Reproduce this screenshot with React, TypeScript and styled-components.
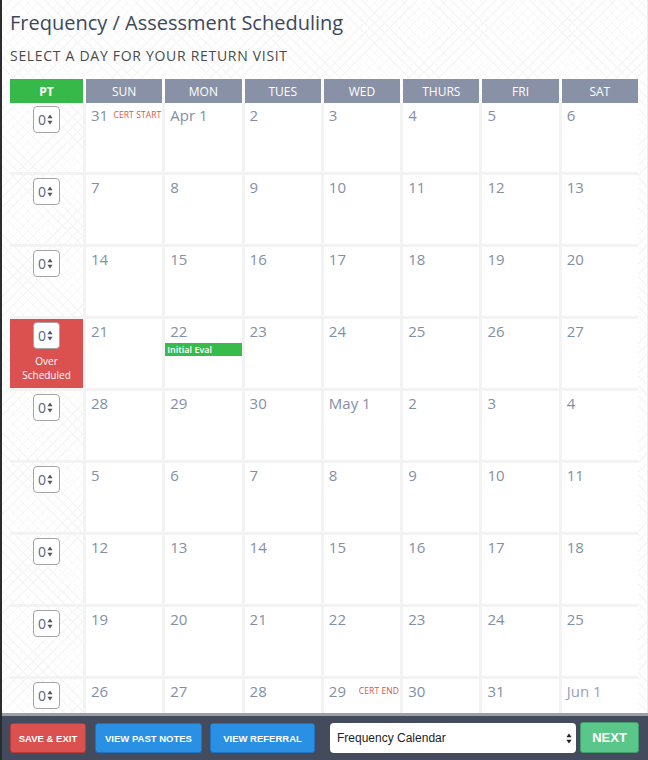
import React from "react";
import styled, { createGlobalStyle } from "styled-components";

const GlobalStyle = createGlobalStyle`
  html, body { margin: 0; padding: 0; background: #2a2a2a; }
  * { box-sizing: border-box; }
`;

const Frame = styled.div`
  width: 648px;
  height: 760px;
  display: flex;
  flex-direction: column;
  border-left: 2px solid #2c2c2c;
  background-color: #ffffff;
  background-image:
    repeating-linear-gradient(45deg, #f6f6f6 0 1px, transparent 1px 7px),
    repeating-linear-gradient(-45deg, #f6f6f6 0 1px, transparent 1px 7px);
  overflow: hidden;
  font-family: "Open Sans", "Liberation Sans", sans-serif;
`;

const Content = styled.div`
  flex: 1;
  min-height: 0;
  overflow: hidden;
  padding: 8px 8px 0 8px;
  border-right: 1px solid #ececec;
`;

const Title = styled.h1`
  margin: 0;
  font-size: 20px;
  line-height: 30px;
  font-weight: 400;
  color: #3d485c;
`;

const Subtitle = styled.h2`
  margin: 8px 0 0 0;
  font-size: 14px;
  line-height: 20px;
  font-weight: 400;
  letter-spacing: 0.7px;
  color: #4a4a4a;
`;

const Grid = styled.div`
  margin-top: 13px;
  display: grid;
  grid-template-columns: 73px repeat(7, 1fr);
  width: 628px;
`;

const HeaderCell = styled.div<{ $pt?: boolean }>`
  height: 24px;
  margin-left: ${(p) => (p.$pt ? "0" : "3px")};
  background: ${(p) => (p.$pt ? "#37b94a" : "#8991a6")};
  color: #ffffff;
  font-size: 12px;
  font-weight: ${(p) => (p.$pt ? 700 : 400)};
  display: flex;
  align-items: center;
  justify-content: center;
`;

const PtCell = styled.div<{ $over?: boolean }>`
  height: 72px;
  border-bottom: 3px solid #f3f3f3;
  background: ${(p) => (p.$over ? "#db5150" : "transparent")};
  display: flex;
  flex-direction: column;
  align-items: center;
  padding-top: 3px;
`;

const Spinner = styled.div`
  width: 27px;
  height: 27px;
  border: 1px solid #a5a5a5;
  border-radius: 4px;
  background: #ffffff;
  display: flex;
  align-items: center;
  padding-left: 4px;
  gap: 1px;
  font-size: 14px;
  color: #5a6378;
`;

const OverText = styled.div`
  margin-top: 5px;
  color: #ffffff;
  font-size: 10px;
  text-align: center;
`;

const OverLine = styled.div`
  height: 14px;
  line-height: 14px;
`;

const DayCell = styled.div`
  height: 72px;
  background: #ffffff;
  border-left: 3px solid #f3f3f3;
  border-bottom: 3px solid #f3f3f3;
  display: flex;
  flex-direction: column;
`;

const DayHead = styled.div`
  display: flex;
  justify-content: space-between;
  align-items: flex-start;
  padding: 3px 1px 0 5px;
`;

const DayNum = styled.span<{ $muted?: boolean }>`
  font-size: 15px;
  line-height: 18px;
  color: ${(p) => (p.$muted ? "#9a9dbc" : "#8290a5")};
`;

const CertLabel = styled.span`
  font-size: 8.5px;
  line-height: 12px;
  margin-top: 3px;
  color: #e0553f;
  letter-spacing: 0.1px;
`;

const EventBar = styled.div`
  margin-top: 3px;
  height: 13px;
  background: #37bb4a;
  color: #ffffff;
  font-size: 9px;
  font-weight: 600;
  line-height: 13px;
  padding-left: 2px;
`;

const Footer = styled.div`
  height: 47px;
  flex-shrink: 0;
  border-top: 3px solid #9b9fa9;
  background: #444b5c;
  display: flex;
  align-items: center;
  padding: 0 7px 0 8px;
`;

const Btn = styled.button<{ $tone: "red" | "blue"; $w: number; $gap: number }>`
  width: ${(p) => p.$w}px;
  height: 30px;
  padding: 0;
  margin-right: ${(p) => p.$gap}px;
  border-radius: 3px;
  border: 1px solid ${(p) => (p.$tone === "red" ? "#b53a39" : "#1f72c0")};
  background: ${(p) => (p.$tone === "red" ? "#da5150" : "#2a90e3")};
  color: #ffffff;
  font-family: "Liberation Sans", Arial, sans-serif;
  font-weight: 700;
  font-size: 9.5px;
  white-space: nowrap;
  display: flex;
  align-items: center;
  justify-content: center;
`;

const SelectBox = styled.div`
  width: 246px;
  height: 30px;
  background: #ffffff;
  border-radius: 4px;
  display: flex;
  align-items: center;
  justify-content: space-between;
  padding: 0 4px 0 7px;
  font-family: "Liberation Sans", Arial, sans-serif;
  font-size: 12px;
  color: #1e1e1e;
`;

const NextBtn = styled.button`
  margin-left: 4px;
  width: 59px;
  height: 31px;
  margin-top: -1px;
  border-radius: 3px;
  border: 1px solid #3f9e69;
  background: #5bc68a;
  color: #ffffff;
  font-family: "Liberation Sans", Arial, sans-serif;
  font-weight: 700;
  font-size: 13px;
`;

const Arrows = ({ color, w = 6 }: { color: string; w?: number }) => (
  <svg width={w} height="11" viewBox="0 0 6 11">
    <path d="M3 0.5 L5.6 4.2 L0.4 4.2 Z" fill={color} />
    <path d="M3 10.5 L5.6 6.8 L0.4 6.8 Z" fill={color} />
  </svg>
);

type Day = { n: string; cert?: string; event?: string; muted?: boolean };

const weeks: Day[][] = [
  [{ n: "31", cert: "CERT START" }, { n: "Apr 1" }, { n: "2" }, { n: "3" }, { n: "4" }, { n: "5" }, { n: "6" }],
  [{ n: "7" }, { n: "8" }, { n: "9" }, { n: "10" }, { n: "11" }, { n: "12" }, { n: "13" }],
  [{ n: "14" }, { n: "15" }, { n: "16" }, { n: "17" }, { n: "18" }, { n: "19" }, { n: "20" }],
  [{ n: "21" }, { n: "22", event: "Initial Eval" }, { n: "23" }, { n: "24" }, { n: "25" }, { n: "26" }, { n: "27" }],
  [{ n: "28" }, { n: "29" }, { n: "30" }, { n: "May 1" }, { n: "2" }, { n: "3" }, { n: "4" }],
  [{ n: "5" }, { n: "6" }, { n: "7" }, { n: "8" }, { n: "9" }, { n: "10" }, { n: "11" }],
  [{ n: "12" }, { n: "13" }, { n: "14" }, { n: "15" }, { n: "16" }, { n: "17" }, { n: "18" }],
  [{ n: "19" }, { n: "20" }, { n: "21" }, { n: "22" }, { n: "23" }, { n: "24" }, { n: "25" }],
  [{ n: "26" }, { n: "27" }, { n: "28" }, { n: "29", cert: "CERT END" }, { n: "30" }, { n: "31" }, { n: "Jun 1", muted: true }],
];

const headers = ["SUN", "MON", "TUES", "WED", "THURS", "FRI", "SAT"];

export default function App() {
  return (
    <>
      <GlobalStyle />
      <Frame>
        <Content>
          <Title>Frequency / Assessment Scheduling</Title>
          <Subtitle>SELECT A DAY FOR YOUR RETURN VISIT</Subtitle>
          <Grid>
            <HeaderCell $pt>PT</HeaderCell>
            {headers.map((h) => (
              <HeaderCell key={h}>{h}</HeaderCell>
            ))}
            {weeks.map((week, wi) => (
              <React.Fragment key={wi}>
                <PtCell $over={wi === 3}>
                  <Spinner>
                    <span>0</span>
                    <Arrows color="#555a63" />
                  </Spinner>
                  {wi === 3 && (
                    <OverText>
                      <OverLine>Over</OverLine>
                      <OverLine>Scheduled</OverLine>
                    </OverText>
                  )}
                </PtCell>
                {week.map((d, di) => (
                  <DayCell key={di}>
                    <DayHead>
                      <DayNum $muted={d.muted}>{d.n}</DayNum>
                      {d.cert && <CertLabel>{d.cert}</CertLabel>}
                    </DayHead>
                    {d.event && <EventBar>{d.event}</EventBar>}
                  </DayCell>
                ))}
              </React.Fragment>
            ))}
          </Grid>
        </Content>
        <Footer>
          <Btn $tone="red" $w={76} $gap={9}>SAVE &amp; EXIT</Btn>
          <Btn $tone="blue" $w={107} $gap={8}>VIEW PAST NOTES</Btn>
          <Btn $tone="blue" $w={105} $gap={15}>VIEW REFERRAL</Btn>
          <SelectBox>
            <span>Frequency Calendar</span>
            <Arrows color="#222" />
          </SelectBox>
          <NextBtn>NEXT</NextBtn>
        </Footer>
      </Frame>
    </>
  );
}
